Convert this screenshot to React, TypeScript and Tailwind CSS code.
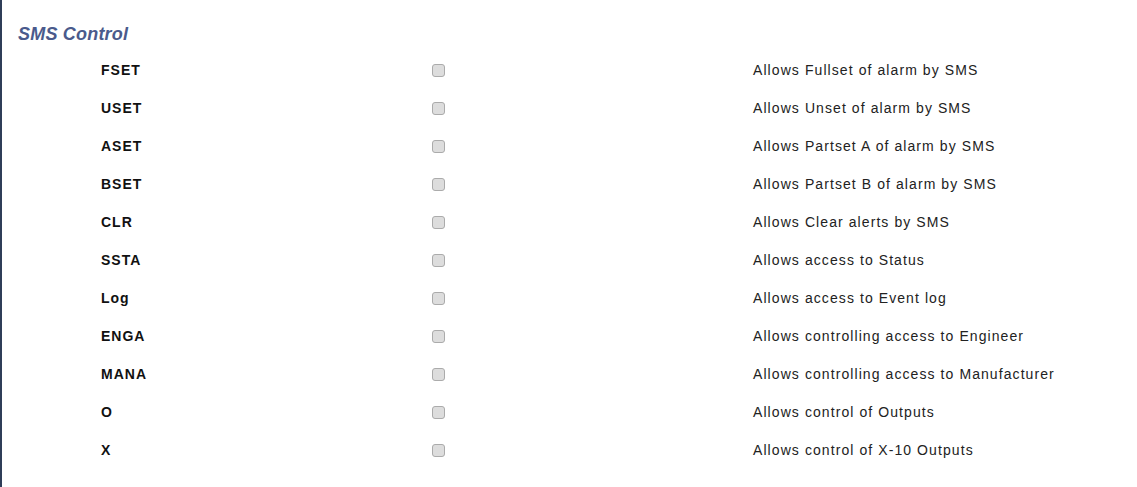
const rows: [string, string][] = [
  ["FSET", "Allows Fullset of alarm by SMS"],
  ["USET", "Allows Unset of alarm by SMS"],
  ["ASET", "Allows Partset A of alarm by SMS"],
  ["BSET", "Allows Partset B of alarm by SMS"],
  ["CLR", "Allows Clear alerts by SMS"],
  ["SSTA", "Allows access to Status"],
  ["Log", "Allows access to Event log"],
  ["ENGA", "Allows controlling access to Engineer"],
  ["MANA", "Allows controlling access to Manufacturer"],
  ["O", "Allows control of Outputs"],
  ["X", "Allows control of X-10 Outputs"],
];

export default function App() {
  return (
    <div className="min-h-[487px] w-[1137px] bg-white border-l-2 border-[#2f3d58] font-['Liberation_Sans',Arial,sans-serif]">
      <div className="pt-[22px] pl-4">
        <h2 className="h-6 leading-6 text-[18px] font-bold italic tracking-[0.2px] text-[#4a5a8c]">SMS Control</h2>
        <div className="mt-[5px] pl-[83px]">
          {rows.map(([code, desc]) => (
            <div key={code} className="grid grid-cols-[331px_321px_1fr] items-center h-[38px]">
              <span className="text-[14px] font-bold tracking-[1px] text-[#111]">{code}</span>
              <span className="w-[13px] h-[13px] rounded-[3px] border border-[#ababab] bg-[#dddddd]" />
              <span className="text-[14px] tracking-[1.08px] text-[#222]">{desc}</span>
            </div>
          ))}
        </div>
      </div>
    </div>
  );
}
